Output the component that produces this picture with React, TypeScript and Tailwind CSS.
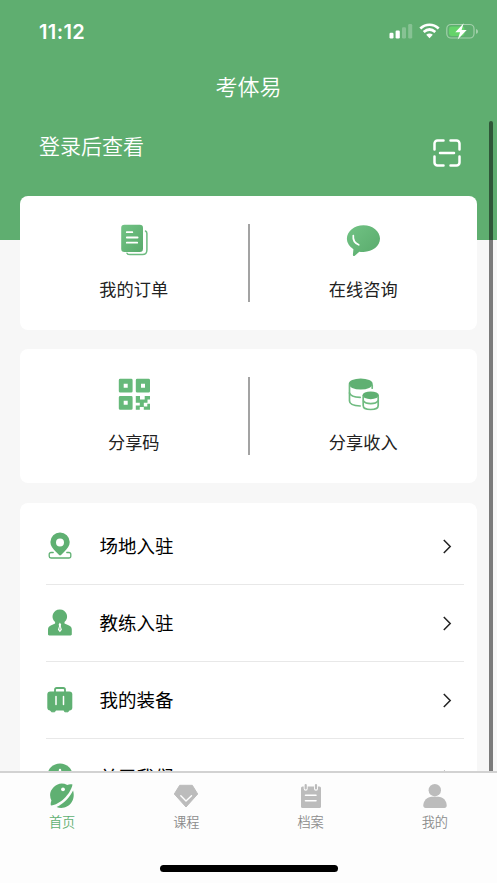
import type { ReactNode } from "react";

const GREEN = "#5fb072";

function OrderIcon() {
  return (
    <svg width="36" height="36" viewBox="0 0 36 36" fill="none">
      <rect x="5.2" y="1.7" width="21.8" height="27.3" rx="3.2" fill="url(#leaf)" />
      <path d="M10.8 9.2h5.5M10.8 14.5h10.8M10.8 19.7h10.4" stroke="#fff" strokeWidth="1.8" strokeLinecap="round" />
      <path d="M29.5 8c1 .5 1.4 1.3 1.4 2.6V27c0 3-1.7 4.6-4.5 4.6H14c-1.8 0-2.6-.5-3-1.4" stroke="#6dbb80" strokeWidth="1.5" strokeLinecap="round" />
    </svg>
  );
}

function ChatIcon() {
  return (
    <svg width="36" height="36" viewBox="0 0 36 36" fill="none">
      <path
        d="M18.500 2.200C9.300 2.200 1.900 8.200 1.900 15.600c0 4.400 2.500 8 6.500 10.600L7.900 31.600c-.1 1.400.9 1.900 1.900 1.100L14.300 28.700c1.300.2 2.800.3 4.200.2 9.200 0 16.500-6 16.500-13.300S27.700 2.200 18.500 2.200Z"
        fill="url(#leaf)"
      />
      <path d="M8.300 12.500c-.5 4.200 1.500 7.600 5.400 9.300" stroke="#fff" strokeWidth="1.700" strokeLinecap="round" />
    </svg>
  );
}

function QrIcon() {
  return (
    <svg width="36" height="36" viewBox="0 0 36 36" fill="#66b97a">
      <path
        fillRule="evenodd"
        d="M4.200 2.800h11a1.400 1.400 0 0 1 1.400 1.400v11a1.400 1.400 0 0 1-1.400 1.400h-11a1.400 1.400 0 0 1-1.400-1.400v-11a1.400 1.400 0 0 1 1.400-1.400ZM7.700 7.700v4h4v-4Z"
      />
      <path
        fillRule="evenodd"
        d="M21.200 2.800h11.400A1.400 1.400 0 0 1 34 4.200v11a1.400 1.400 0 0 1-1.400 1.400H21.200a1.400 1.400 0 0 1-1.400-1.400v-11a1.400 1.400 0 0 1 1.400-1.400ZM25 7.700v4h4v-4Z"
      />
      <path
        fillRule="evenodd"
        d="M4.200 20h11a1.400 1.400 0 0 1 1.400 1.400v11a1.400 1.400 0 0 1-1.400 1.400h-11a1.400 1.400 0 0 1-1.400-1.400v-11A1.400 1.400 0 0 1 4.200 20ZM7.700 24.800v4h4v-4Z"
      />
      <path d="M19.800 20h4.200v3.500h4.700V20H34v3.500h-2.500v3.300h-3.700v3.700h3.500v-2.700H34v6h-6.200v-2.800h-4v2.800h-4v-4.300h4v-2.700h-4Z" />
    </svg>
  );
}

function CoinsIcon() {
  return (
    <svg width="36" height="36" viewBox="0 0 36 36" fill="none" stroke="#6fbb80" strokeWidth="1.700" strokeLinecap="round">
      <ellipse cx="15.700" cy="8" rx="12" ry="5.500" fill={GREEN} stroke="none" />
      <path d="M4.500 9v16c0 2.700 4.200 4.700 10.700 5" />
      <path d="M4.500 17c.7 2.600 4.600 4.200 10.700 4.400" />
      <path d="M27.200 9v3.200" />
      <ellipse cx="25.700" cy="19.300" rx="8.200" ry="3.900" fill={GREEN} stroke="none" />
      <path d="M18.200 20.500v9c0 2.300 3 4 7.500 4s7.500-1.700 7.500-4v-9" />
      <path d="M18.500 25c1.300 1.800 3.800 2.600 7.200 2.600s6-.8 7.200-2.600" />
    </svg>
  );
}

function PlaceIcon() {
  return (
    <svg width="28" height="28" viewBox="0 0 28 28" fill="none">
      <path
        fillRule="evenodd"
        d="M14 .5A9.500 9.500 0 0 0 4.400 10c0 3.800 2.300 6.400 5.200 9.500l3.500 3.500c.6.6 1.300.6 1.900 0l3.500-3.500c2.900-3.100 5.200-5.700 5.200-9.500A9.600 9.600 0 0 0 14 .5Zm0 5.900a4 4 0 1 1 0 8 4 4 0 0 1 0-8Z"
        fill={GREEN}
      />
      <path d="M7.200 20.500H5a1.800 1.800 0 0 0-1.800 1.800v1.900A1.800 1.800 0 0 0 5 26h18a1.800 1.800 0 0 0 1.800-1.800v-1.900a1.800 1.800 0 0 0-1.800-1.800h-2.200" stroke={GREEN} strokeWidth="1.300" strokeLinecap="round" />
    </svg>
  );
}

function CoachIcon() {
  return (
    <svg width="28" height="28" viewBox="0 0 28 28" fill="none">
      <path
        d="M13.800.4a7.200 7.200 0 0 0-4.700 12.700v1.400l-4.300 2C3 17.300 2 18.600 2 20.600v4.700c0 .7.500 1.200 1.200 1.200h21.400c.7 0 1.200-.5 1.200-1.200v-4.700c0-2-1-3.300-2.800-4.100l-4.500-2v-1.400A7.200 7.200 0 0 0 13.800.4Z"
        fill={GREEN}
      />
      <path d="M13.900 13.600l-1.300 2.100.5 1.400-1.200 3.700 2 2.500 2-2.500-1.200-3.700.5-1.400Z" fill="#fff" />
      <path d="M13.900 18.500v2.600" stroke={GREEN} strokeWidth=".8" />
    </svg>
  );
}

function GearIcon() {
  return (
    <svg width="28" height="28" viewBox="0 0 28 28" fill="none">
      <path d="M9 6V3.700c0-1.100.6-1.700 1.700-1.700h6.600c1.100 0 1.700.6 1.700 1.700V6" stroke={GREEN} strokeWidth="1.800" />
      <rect x="1.300" y="5.600" width="25" height="19" rx="3" fill={GREEN} />
      <path d="M4.500 24.300h5l-.8 1.500H5.500ZM18 24.300h5l-1 1.500h-3.200Z" fill={GREEN} stroke={GREEN} />
      <path d="M10 10.500v8M17.500 10.500v8" stroke="#fff" strokeWidth="1.500" strokeLinecap="round" />
    </svg>
  );
}

function AboutIcon() {
  return (
    <svg width="28" height="28" viewBox="0 0 28 28" fill="none">
      <circle cx="14" cy="13" r="12.600" fill={GREEN} />
      <path d="M14 7v1M14 12v8" stroke="#fff" strokeWidth="2.400" strokeLinecap="round" />
    </svg>
  );
}

function HomeTabIcon() {
  return (
    <svg width="26" height="26" viewBox="0 0 26 26" fill="none">
      <path
        d="M23.500 1.500C21.600.9 19.900 1.200 18.300 1.900A11.800 11.800 0 0 0 2.400 17.500C1.600 19.700 1.400 21.800 2 22.600 10.500 21.800 21.500 11.500 23.500 1.500Z"
        fill={GREEN}
      />
      <path d="M24.100 7.600c1.100 3.700.8 7.800-1.200 11.200-3.200 5.500-9.600 7.500-15.300 5.300C14.500 21 20.700 14.500 24.100 7.600Z" fill={GREEN} />
      <circle cx="14" cy="6.300" r="1.900" fill="#fff" />
    </svg>
  );
}

function CourseTabIcon() {
  return (
    <svg width="26" height="26" viewBox="0 0 26 26" fill="none">
      <path d="M6.700 2.300h12.600L24.700 11 13 24 1.300 11Z" fill="#bcbcbc" stroke="#bcbcbc" strokeLinejoin="round" />
      <path d="M7.800 12.800 13 18l5.500-5.200" stroke="#fff" strokeWidth="1.400" strokeLinecap="round" strokeLinejoin="round" />
    </svg>
  );
}

function FileTabIcon() {
  return (
    <svg width="26" height="26" viewBox="0 0 26 26" fill="none">
      <rect x="3" y="3.500" width="20" height="21.500" rx="1.500" fill="#bcbcbc" />
      <path d="M7.700 1.700v4M18 1.700v4" stroke="#fdfdfd" strokeWidth="4" strokeLinecap="round" />
      <path d="M7.700 2v3.500M18 2v3.500" stroke="#bcbcbc" strokeWidth="2.200" strokeLinecap="round" />
      <path d="M7.500 12.200H18M7.500 17.700H18" stroke="#fff" strokeWidth="1.600" strokeLinecap="round" />
    </svg>
  );
}

function MineTabIcon() {
  return (
    <svg width="26" height="26" viewBox="0 0 26 26" fill="#bcbcbc">
      <circle cx="12.800" cy="7.200" r="6.200" />
      <path d="M1.300 22.500c0-4.700 4-8.700 8.500-8.700h6.500c4.600 0 8.400 4 8.400 8.700 0 1.500-.8 2.500-2.300 2.500H3.600c-1.500 0-2.300-1-2.300-2.500Z" />
    </svg>
  );
}

function StatusBar() {
  return (
    <div className="flex h-[62px] items-center justify-between pr-[18px] pl-[39px]">
      <span className="mt-px font-[Inter] text-[20px] leading-none font-semibold tracking-[0.4px]">11:12</span>
      <svg width="90" height="20" viewBox="0 0 90 20" fill="none">
        <g fill="#fff">
          <rect x="0.500" y="11.800" width="4" height="5.700" rx="1.200" />
          <rect x="6.600" y="9.600" width="4.200" height="7.900" rx="1.200" />
          <rect x="13" y="6.300" width="4" height="11.200" rx="1.200" opacity=".25" />
          <rect x="19.200" y="3" width="4" height="14.500" rx="1.200" opacity=".25" />
        </g>
        <path d="M31.300 7.500C36.800 2.500 44.200 2.500 49.700 7.500M34.700 11.100C38.300 7.900 42.700 7.900 46.300 11.100" stroke="#fff" strokeWidth="2.700" />
        <path d="M37.200 13.800C39.200 12.100 41.800 12.100 43.800 13.800L40.500 17.200Z" fill="#fff" />
        <rect x="57.800" y="3.500" width="27.200" height="13.500" rx="4.200" stroke="#a3d0ab" strokeWidth="1.200" />
        <rect x="60" y="5.600" width="15.500" height="9.300" rx="2.300" fill="#65d36a" />
        <path d="M87 8v4.800c1.500-.5 2-1.300 2-2.400S88.500 8.500 87 8Z" fill="#a3d0ab" />
        <path d="M74.700 2.300 66.300 11.200h4.800l-2.400 7.200 9-9.300h-5.100Z" fill="#fff" />
      </svg>
    </div>
  );
}

function ScanIcon() {
  return (
    <svg width="30" height="30" viewBox="0 0 30 30" fill="none" stroke="#fff" strokeWidth="2.500" strokeLinecap="round">
      <path d="M11.500 2.500H5.500a3 3 0 0 0-3 3v6M18.500 2.500h6a3 3 0 0 1 3 3v6M27.500 18.500v6a3 3 0 0 1-3 3h-6M11.500 27.500H5.500a3 3 0 0 1-3-3v-6M8 14.900h14" />
    </svg>
  );
}

type Item = { label: string; icon: ReactNode };

function PairCard({ items }: { items: [Item, Item] }) {
  return (
    <div className="flex h-[134px] items-center rounded-[8px] bg-white">
      <Entry {...items[0]} />
      <div className="h-[78px] w-[2px] bg-[#a3a3a3]" />
      <Entry {...items[1]} />
    </div>
  );
}

function Entry({ label, icon }: Item) {
  return (
    <button type="button" className="flex h-full flex-1 flex-col items-center pt-[27px]">
      {icon}
      <span className="mt-[18px] text-[17.2px] leading-6 text-[#222]">{label}</span>
    </button>
  );
}

const ROWS: Item[] = [
  { label: "场地入驻", icon: <PlaceIcon /> },
  { label: "教练入驻", icon: <CoachIcon /> },
  { label: "我的装备", icon: <GearIcon /> },
  { label: "关于我们", icon: <AboutIcon /> },
];

const TABS: Item[] = [
  { label: "首页", icon: <HomeTabIcon /> },
  { label: "课程", icon: <CourseTabIcon /> },
  { label: "档案", icon: <FileTabIcon /> },
  { label: "我的", icon: <MineTabIcon /> },
];

export default function App() {
  return (
    <div className="relative flex h-[883px] w-full flex-col overflow-hidden bg-[#f7f7f7] font-['Noto_Sans_CJK_SC',sans-serif]">
      <svg width="0" height="0" className="absolute">
        <defs>
          <linearGradient id="leaf" x1="0" y1="0" x2="1" y2="1">
            <stop offset="0" stopColor="#72c385" />
            <stop offset="1" stopColor="#58aa6b" />
          </linearGradient>
        </defs>
      </svg>

      <main className="h-[771px] shrink-0 overflow-hidden">
        <header className="h-[240px] bg-[#5fae70] text-white">
          <StatusBar />
          <h1 className="mt-[7px] text-center text-[22px] leading-8 font-[350]">考体易</h1>
          <div className="flex items-start justify-between pt-[28px] pr-[35px] pl-[39px]">
            <span className="text-[21px] leading-8 font-[350]">登录后查看</span>
            <span className="pt-[9px]">
              <ScanIcon />
            </span>
          </div>
        </header>

        <div className="-mt-[44px] flex flex-col gap-[19.3px] px-5">
          <PairCard
            items={[
              { label: "我的订单", icon: <OrderIcon /> },
              { label: "在线咨询", icon: <ChatIcon /> },
            ]}
          />
          <PairCard
            items={[
              { label: "分享码", icon: <QrIcon /> },
              { label: "分享收入", icon: <CoinsIcon /> },
            ]}
          />
          <div className="rounded-[8px] bg-white pt-[5.400px] pr-[13px] pl-[26px]">
            {ROWS.map((row) => (
              <button key={row.label} type="button" className="flex h-[77px] w-full items-center border-b border-[#e8e8e8]">
                {row.icon}
                <span className="mb-[2px] ml-[25.500px] text-[18.500px] leading-7 text-black">{row.label}</span>
                <svg className="mr-[12px] ml-auto" width="10" height="16" viewBox="0 0 10 16" fill="none">
                  <path d="M1.800 2 8.200 8.500l-6.400 6.500" stroke="#222" strokeWidth="1.500" />
                </svg>
              </button>
            ))}
          </div>
        </div>
      </main>

      <div className="absolute top-[121px] left-[489px] h-[650px] w-1 rounded-t-full bg-black/50" />

      <nav className="relative flex h-[112px] shrink-0 flex-col border-t-2 border-[#d2d2d2] bg-[#fdfdfd]">
        <div className="flex">
          {TABS.map((tab, i) => (
            <button
              key={tab.label}
              type="button"
              className={`flex flex-1 flex-col items-center pt-[10px] ${i === 0 ? "text-[#5fb072]" : "text-[#8c8c8c]"}`}
            >
              {tab.icon}
              <span className="mt-[3px] text-[13.200px] leading-5 font-[350]">{tab.label}</span>
            </button>
          ))}
        </div>
        <div className="mx-auto mt-auto mb-[11px] h-[7px] w-[178px] rounded-full bg-black" />
      </nav>
    </div>
  );
}
